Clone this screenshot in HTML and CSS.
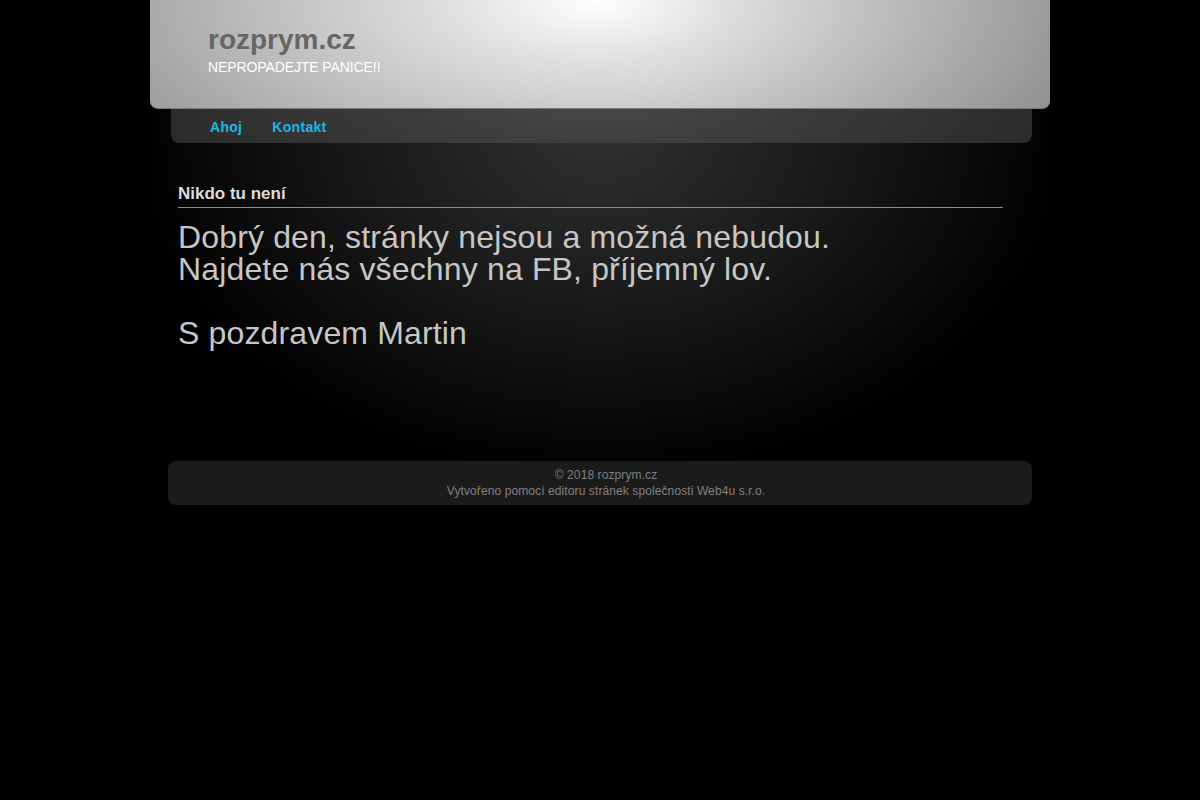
FILE: index.html
```html
<!DOCTYPE html>
<html lang="cs">
<head>
<meta charset="utf-8">
<title>rozprym.cz</title>
<link rel="stylesheet" href="styles.css">
</head>
<body>
<div class="page">
  <header class="header">
    <div class="brand">rozprym.cz</div>
    <div class="slogan">NEPROPADEJTE PANICE!!</div>
  </header>
  <nav class="nav">
    <a href="#">Ahoj</a>
    <a href="#">Kontakt</a>
  </nav>
  <main class="content">
    <h1 class="title">Nikdo tu není</h1>
    <div class="text">
      <p class="line">Dobrý den, stránky nejsou a možná nebudou.</p>
      <p class="line">Najdete nás všechny na FB, příjemný lov.</p>
      <p class="line blank">&nbsp;</p>
      <p class="line">S pozdravem Martin</p>
    </div>
  </main>
  <footer class="footer">
    <div>© 2018 rozprym.cz</div>
    <div>Vytvořeno pomocí editoru stránek společnosti Web4u s.r.o.</div>
  </footer>
</div>
</body>
</html>
```
FILE: styles.css
```css
html, body {
  margin: 0;
  padding: 0;
  background: #000;
  font-family: "Liberation Sans", Arial, sans-serif;
}
.page {
  width: 900px;
  margin: 0 auto;
  padding-bottom: 20px;
  background: radial-gradient(ellipse 470px 350px at 50% 130px, #303030 0%, #1c1c1c 45%, #0a0a0a 80%, #000 100%);
}
.header {
  height: 109px;
  border-bottom: 1px solid #7a7a7a;
  border-radius: 0 0 8px 8px;
  background:
    linear-gradient(90deg, rgba(0,0,0,0) 0%, rgba(0,0,0,0) 55%, rgba(0,0,0,0.08) 100%),
    radial-gradient(ellipse 540px 230px at 445px 0, #ffffff 0%, #e2e2e2 25%, #c0c0c0 60%, #999 100%);
  padding-left: 58px;
  box-sizing: border-box;
}
.brand {
  padding-top: 24px;
  font-size: 28px;
  font-weight: bold;
  color: #666;
  line-height: 32px;
}
.slogan {
  font-size: 14px;
  color: #fff;
  line-height: 18px;
  margin-top: 2px;
  letter-spacing: -0.1px;
}
.nav {
  margin-left: 21px;
  width: 861px;
  height: 34px;
  border-radius: 0 0 8px 8px;
  background: radial-gradient(ellipse 520px 120px at 50% 0, #474747 0%, #363636 55%, #262626 100%);
  display: flex;
  align-items: center;
  gap: 30px;
  padding: 2px 0 0 39px;
  box-sizing: border-box;
}
.nav a {
  color: #19b8e6;
  font-weight: bold;
  font-size: 14px;
  letter-spacing: 0.3px;
  text-decoration: none;
}
.content {
  padding: 41px 47px 0 28px;
  min-height: 277px;
}
.title {
  margin: 0;
  font-size: 17px;
  font-weight: bold;
  color: #dcdcdc;
  line-height: 20px;
  padding-bottom: 3px;
  border-bottom: 1px solid #8c8c8c;
}
.text {
  margin-top: 13px;
  font-size: 32px;
  line-height: 32px;
  color: #c6c6c6;
  letter-spacing: 0.15px;
}
.line {
  margin: 0;
  height: 32px;
}
.footer {
  margin-left: 18px;
  width: 864px;
  height: 44px;
  box-sizing: border-box;
  padding: 6px 0 0 12px;
  border-radius: 8px;
  background: #1b1b1b;
  color: #808080;
  font-size: 12px;
  line-height: 16px;
  letter-spacing: 0.1px;
  text-align: center;
}
```
